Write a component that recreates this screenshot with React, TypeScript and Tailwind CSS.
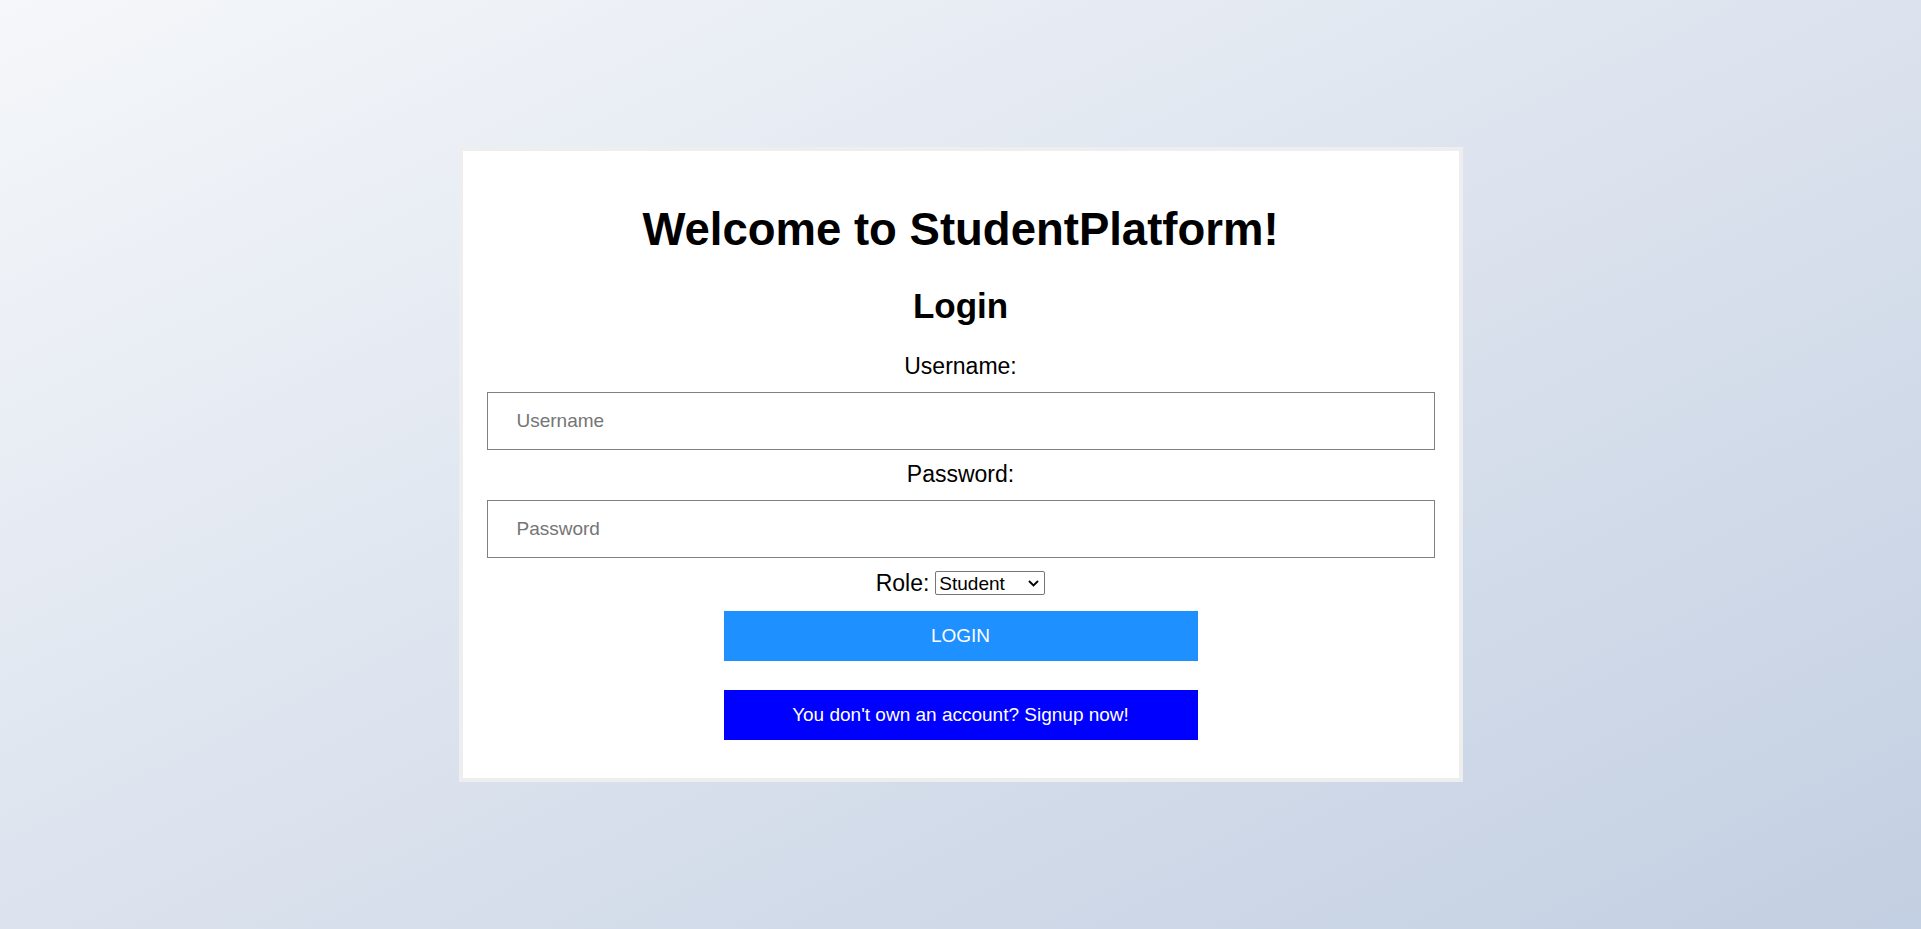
export default function App() {
  return (
    <div className="min-h-screen flex items-center justify-center bg-gradient-to-br from-[#f5f7fa] to-[#c3cfe2] font-['Liberation_Sans',Arial,sans-serif] text-black">
      <div className="w-[1004px] bg-white border-4 border-[#eeeeee] px-6 pt-[53px] pb-[38px] flex flex-col items-center">
        <h1 className="text-[45.5px] font-bold leading-[52px]">Welcome to StudentPlatform!</h1>
        <h2 className="mt-[30px] text-[35px] font-bold leading-[39px]">Login</h2>

        <form className="w-full flex flex-col items-center" onSubmit={(e) => e.preventDefault()}>
          <label htmlFor="username" className="mt-[28px] text-[23px] leading-[26px]">
            Username:
          </label>
          <input
            id="username"
            type="text"
            placeholder="Username"
            className="mt-[13px] w-full h-[58px] border border-[#808080] px-[29px] text-[19px] placeholder:text-[#757575] outline-none"
          />

          <label htmlFor="password" className="mt-[11px] text-[23px] leading-[26px]">
            Password:
          </label>
          <input
            id="password"
            type="password"
            placeholder="Password"
            className="mt-[13px] w-full h-[58px] border border-[#808080] px-[29px] text-[19px] placeholder:text-[#757575] outline-none"
          />

          <div className="mt-[12px] flex items-center gap-[6px]">
            <label htmlFor="role" className="text-[23px] leading-[26px]">
              Role:
            </label>
            <div className="relative">
              <select
                id="role"
                defaultValue="student"
                className="appearance-none block w-[110px] h-[24px] border border-[#767676] rounded-[2px] bg-white pl-[3px] text-[19px] leading-none outline-none"
              >
                <option value="student">Student</option>
                <option value="teacher">Teacher</option>
              </select>
              <svg
                className="pointer-events-none absolute right-[6px] top-[9px]"
                width="11"
                height="7"
                viewBox="0 0 11 7"
                fill="none"
              >
                <polyline points="1,1 5.5,5.5 10,1" stroke="#000" strokeWidth="1.8" />
              </svg>
            </div>
          </div>

          <button
            type="submit"
            className="mt-[15px] w-1/2 h-[50px] bg-[#1e90ff] text-white text-[19px]"
          >
            LOGIN
          </button>
        </form>

        <button type="button" className="mt-[29px] w-1/2 h-[50px] bg-[#0000ff] text-white text-[19px]">
          You don't own an account? Signup now!
        </button>
      </div>
    </div>
  );
}
